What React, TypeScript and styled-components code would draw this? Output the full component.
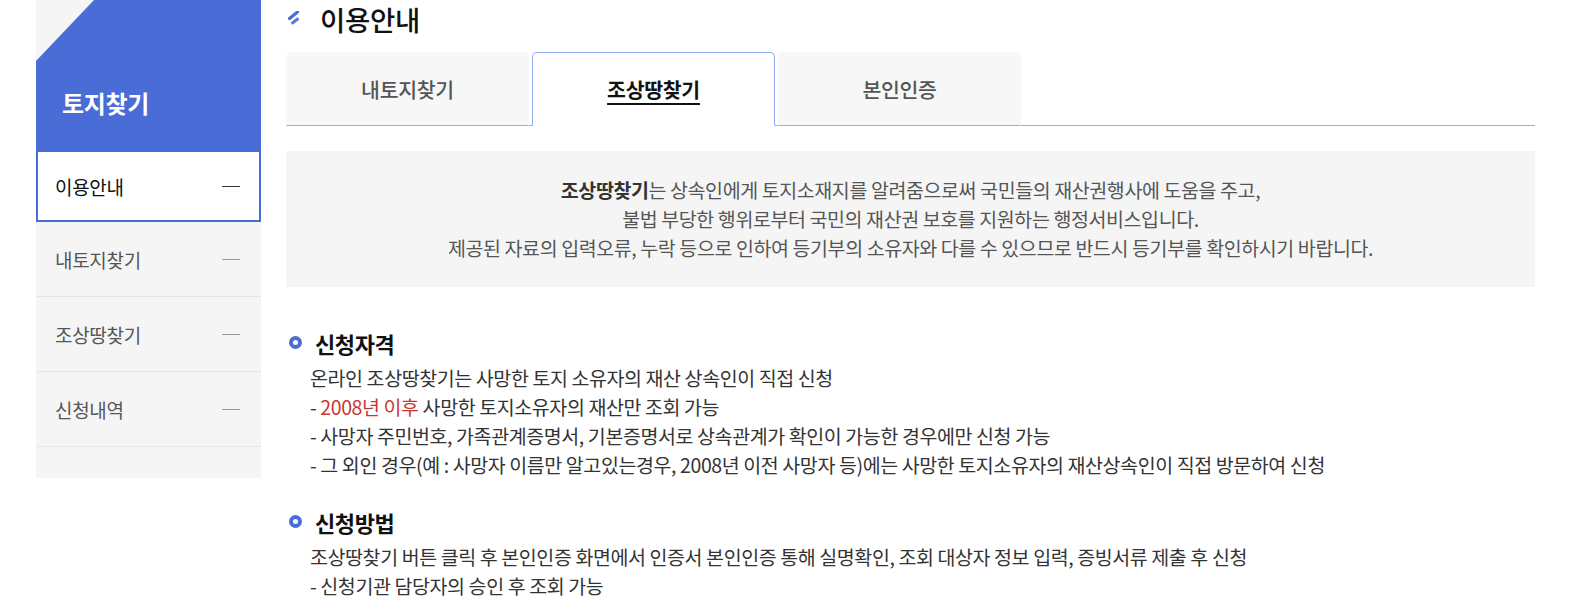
import React from "react";
import styled, { createGlobalStyle } from "styled-components";

const GlobalStyle = createGlobalStyle`
  html, body { margin: 0; padding: 0; background: #fff; }
  body { font-family: "Noto Sans CJK KR", "Noto Sans", sans-serif; color: #333; }
  * { box-sizing: border-box; }
`;

const BLUE = "#4a6cd6";

const Page = styled.div`
  display: flex;
  align-items: flex-start;
  gap: 25px;
  padding-left: 36px;
  width: 1580px;
  height: 610px;
  overflow: hidden;
`;

const Sidebar = styled.aside`
  width: 225px;
  flex: none;
  background: #f5f5f5;
  padding-bottom: 31px;
`;

const SideHeader = styled.div`
  height: 150px;
  background: ${BLUE};
  clip-path: polygon(58px 0, 100% 0, 100% 100%, 0 100%, 0 61px);
  padding: 88px 0 0 26px;
  color: #fff;
  font-size: 24px;
  font-weight: 700;
  line-height: 30px;
  letter-spacing: -0.3px;
`;

const NavList = styled.ul`
  list-style: none;
  margin: 0;
  padding: 0;
`;

const NavItem = styled.li<{ $active?: boolean }>`
  display: flex;
  align-items: center;
  justify-content: space-between;
  height: ${(p) => (p.$active ? "72px" : "75px")};
  padding: ${(p) => (p.$active ? "0 19px 0 17px" : "0 21px 0 19px")};
  background: ${(p) => (p.$active ? "#fff" : "transparent")};
  border: ${(p) => (p.$active ? `2px solid ${BLUE}` : "none")};
  border-bottom: ${(p) => (p.$active ? `2px solid ${BLUE}` : "1px solid #e6e6e6")};
  font-size: 19px;
  color: ${(p) => (p.$active ? "#111" : "#555")};
  letter-spacing: -0.3px;
`;

const Dash = styled.span<{ $active?: boolean }>`
  width: 18px;
  height: 1px;
  background: ${(p) => (p.$active ? "#333" : "#999")};
`;

const Main = styled.main`
  width: 1249px;
  flex: none;
`;

const Title = styled.h2`
  display: flex;
  align-items: center;
  height: 38px;
  margin: 0 0 14px;
  font-size: 27.5px;
  font-weight: 500;
  color: #111;
  letter-spacing: -0.3px;
`;

const TitleIcon = styled.svg`
  width: 14px;
  height: 16px;
  margin: 0 19px 0 1px;
`;

const Tabs = styled.div`
  display: flex;
  gap: 3px;
  border-bottom: 1px solid #8fadf3;
`;

const Tab = styled.div<{ $active?: boolean }>`
  width: 243px;
  height: 74px;
  display: flex;
  align-items: center;
  justify-content: center;
  border-radius: 5px 5px 0 0;
  margin-bottom: -1px;
  background: ${(p) => (p.$active ? "#fff" : "#f7f7f7")};
  border: 1px solid ${(p) => (p.$active ? "#8fadf3" : "#f7f7f7")};
  border-bottom: ${(p) => (p.$active ? "1px solid #fff" : "1px solid #8fadf3")};
  font-size: 20.5px;
  font-weight: ${(p) => (p.$active ? 700 : 500)};
  color: ${(p) => (p.$active ? "#111" : "#555")};
  text-decoration: ${(p) => (p.$active ? "underline" : "none")};
  text-underline-offset: 5px;
  text-decoration-thickness: 2px;
  letter-spacing: -0.3px;
`;

const InfoBox = styled.div`
  margin-top: 25px;
  background: #f5f5f5;
  padding: 24px 20px 25px;
  text-align: center;
  font-size: 19.5px;
  line-height: 29px;
  color: #555;
  letter-spacing: -0.4px;
`;

const Strong = styled.strong`
  color: #333;
  font-weight: 700;
`;

const Section = styled.section<{ $top: number }>`
  margin-top: ${(p) => p.$top}px;
`;

const Heading = styled.h3`
  display: flex;
  align-items: center;
  margin: 0 0 6px;
  padding-left: 3px;
  height: 29px;
  font-size: 22px;
  font-weight: 700;
  color: #111;
  letter-spacing: -0.4px;
`;

const Bullet = styled.span`
  width: 13px;
  height: 13px;
  border-radius: 50%;
  border: 4px solid ${BLUE};
  margin-right: 13px;
  flex: none;
`;

const Body = styled.div`
  padding-left: 24px;
  font-size: 19.5px;
  line-height: 29px;
  color: #333;
  letter-spacing: -0.4px;
`;

const Line = styled.div``;

const Red = styled.span`
  color: #c8372f;
`;

const navItems = ["이용안내", "내토지찾기", "조상땅찾기", "신청내역"];

export default function App() {
  return (
    <>
      <GlobalStyle />
      <Page>
        <Sidebar>
          <SideHeader>토지찾기</SideHeader>
          <NavList>
            {navItems.map((n, i) => (
              <NavItem key={n} $active={i === 0}>
                <span>{n}</span>
                <Dash $active={i === 0} />
              </NavItem>
            ))}
          </NavList>
        </Sidebar>
        <Main>
          <Title>
            <TitleIcon viewBox="0 0 14 16">
              <line x1="2.5" y1="7.5" x2="10.5" y2="1" stroke={BLUE} strokeWidth="3.2" strokeLinecap="round" />
              <line x1="5.5" y1="12" x2="10.5" y2="8" stroke="#5b7de0" strokeWidth="3" strokeLinecap="round" />
            </TitleIcon>
            이용안내
          </Title>
          <Tabs>
            <Tab>내토지찾기</Tab>
            <Tab $active>조상땅찾기</Tab>
            <Tab>본인인증</Tab>
          </Tabs>
          <InfoBox>
            <div>
              <Strong>조상땅찾기</Strong>는 상속인에게 토지소재지를 알려줌으로써 국민들의 재산권행사에 도움을 주고,
            </div>
            <div>불법 부당한 행위로부터 국민의 재산권 보호를 지원하는 행정서비스입니다.</div>
            <div>제공된 자료의 입력오류, 누락 등으로 인하여 등기부의 소유자와 다를 수 있으므로 반드시 등기부를 확인하시기 바랍니다.</div>
          </InfoBox>
          <Section $top={41}>
            <Heading>
              <Bullet />
              신청자격
            </Heading>
            <Body>
              <Line>온라인 조상땅찾기는 사망한 토지 소유자의 재산 상속인이 직접 신청</Line>
              <Line>
                - <Red>2008년 이후</Red> 사망한 토지소유자의 재산만 조회 가능
              </Line>
              <Line>- 사망자 주민번호, 가족관계증명서, 기본증명서로 상속관계가 확인이 가능한 경우에만 신청 가능</Line>
              <Line>- 그 외인 경우(예 : 사망자 이름만 알고있는경우, 2008년 이전 사망자 등)에는 사망한 토지소유자의 재산상속인이 직접 방문하여 신청</Line>
            </Body>
          </Section>
          <Section $top={28}>
            <Heading>
              <Bullet />
              신청방법
            </Heading>
            <Body>
              <Line>조상땅찾기 버튼 클릭 후 본인인증 화면에서 인증서 본인인증 통해 실명확인, 조회 대상자 정보 입력, 증빙서류 제출 후 신청</Line>
              <Line>- 신청기관 담당자의 승인 후 조회 가능</Line>
            </Body>
          </Section>
        </Main>
      </Page>
    </>
  );
}
